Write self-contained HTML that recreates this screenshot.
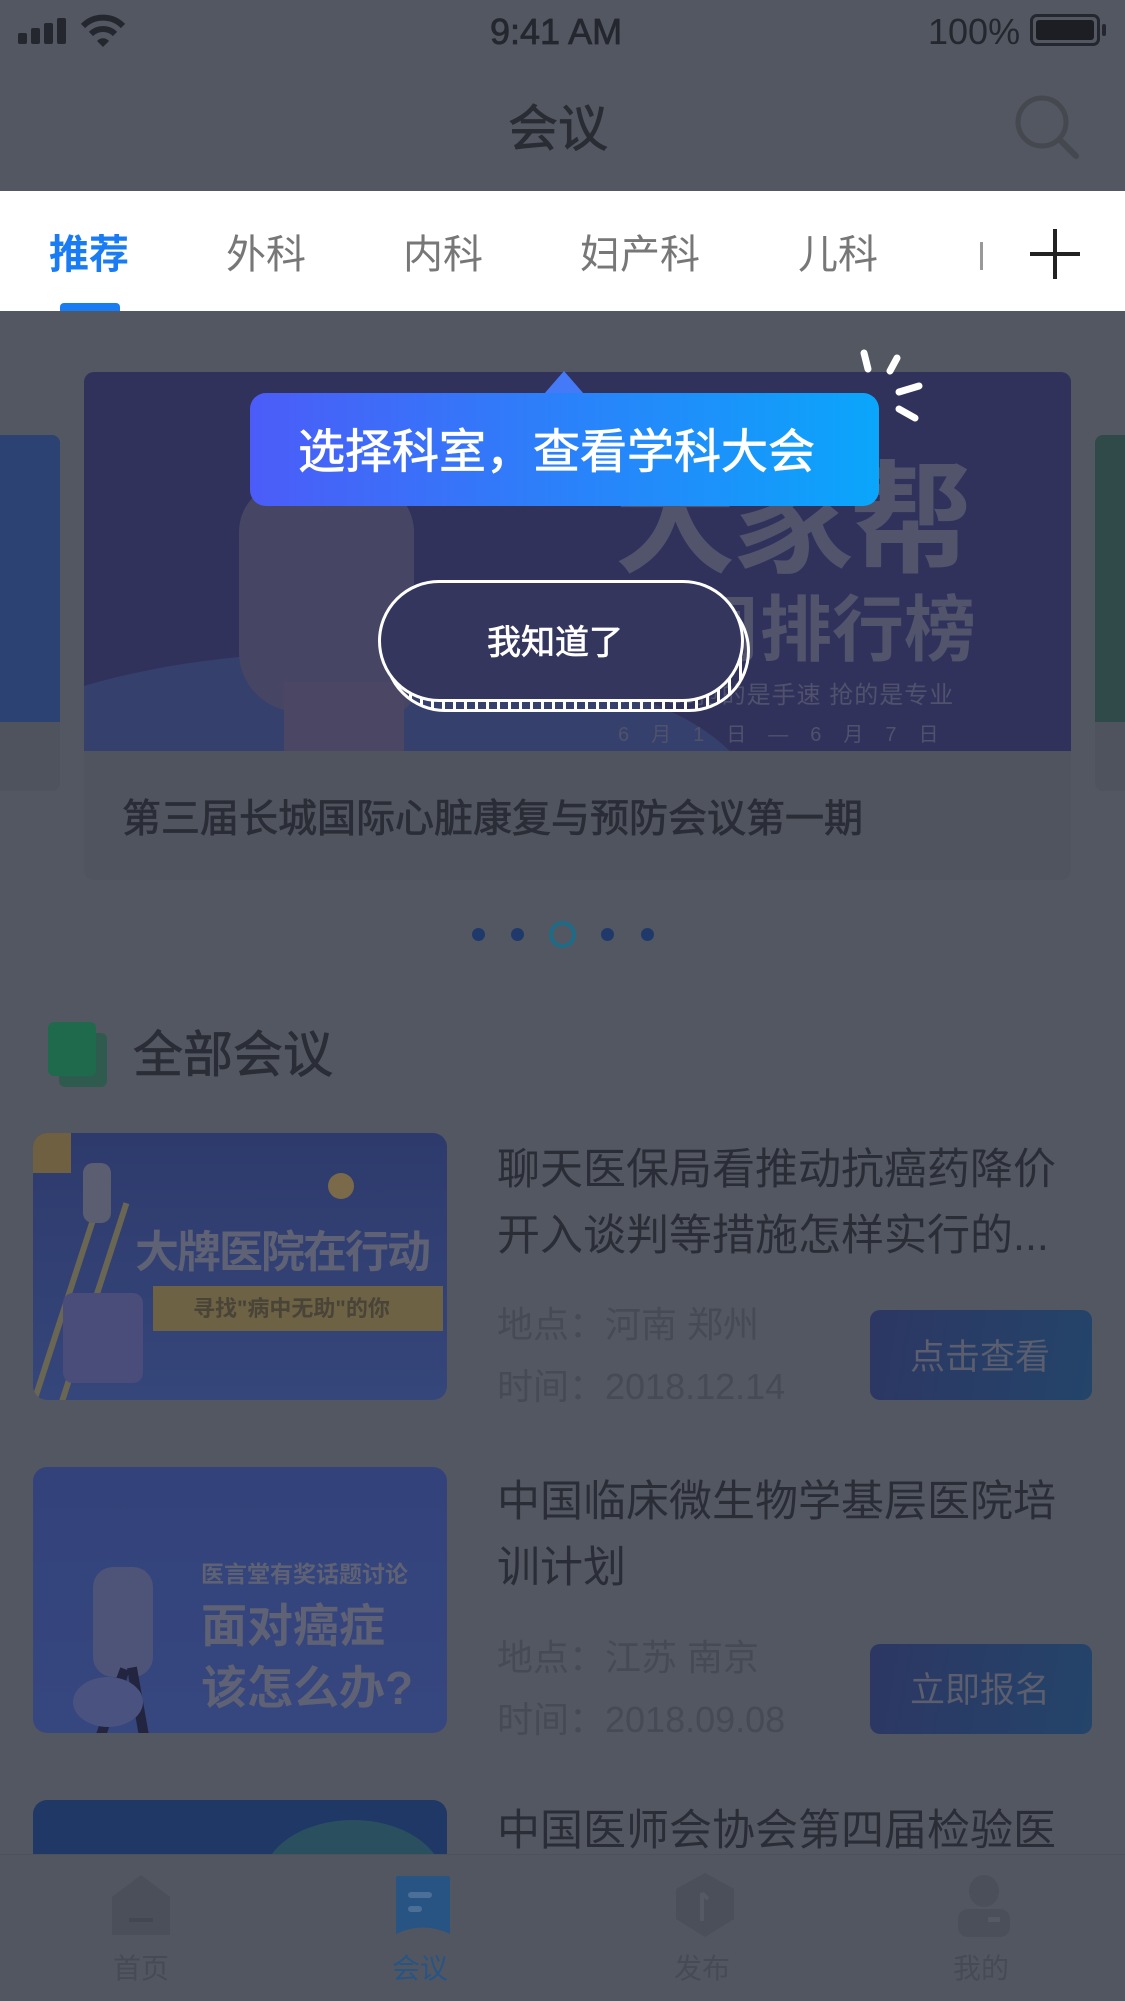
<!DOCTYPE html>
<html><head><meta charset="utf-8"><style>
*{margin:0;padding:0;box-sizing:border-box}
body{width:1125px;height:2001px;background:#535762;position:relative;overflow:hidden;font-family:"Liberation Sans","Noto Sans CJK SC",sans-serif;color:#2a2d36}
.a{position:absolute;white-space:nowrap;line-height:1}
.m{font-weight:normal;-webkit-text-stroke:0.8px currentColor}
</style></head><body>
<!-- status bar -->
<div class="a" style="left:18px;top:18px;width:52px;height:26px">
 <div class="a" style="left:0;top:15px;width:9px;height:11px;background:#25272e;border-radius:2px"></div>
 <div class="a" style="left:13px;top:10px;width:9px;height:16px;background:#25272e;border-radius:2px"></div>
 <div class="a" style="left:26px;top:5px;width:9px;height:21px;background:#25272e;border-radius:2px"></div>
 <div class="a" style="left:39px;top:0;width:9px;height:26px;background:#25272e;border-radius:2px"></div>
</div>
<svg class="a" style="left:80px;top:14px" width="46" height="34" viewBox="0 0 46 34"><path d="M3 12 A28 28 0 0 1 43 12" stroke="#25272e" stroke-width="6" fill="none"/><path d="M11 20 A17 17 0 0 1 35 20" stroke="#25272e" stroke-width="6" fill="none"/><path d="M17 27 L23 33 L29 27 A8 8 0 0 0 17 27Z" fill="#25272e"/></svg>
<div class="a m" style="left:490px;top:14px;font-size:36px;color:#25272e">9:41 AM</div>
<div class="a" style="left:928px;top:14px;font-size:36px;color:#25272e">100%</div>
<div class="a" style="left:1030px;top:14px;width:70px;height:32px;border:3px solid #25272e;border-radius:7px;padding:3px"><div style="width:100%;height:100%;background:#1c1e24;border-radius:3px"></div></div>
<div class="a" style="left:1102px;top:24px;width:4px;height:12px;background:#25272e;border-radius:2px"></div>
<!-- nav -->
<div class="a m" style="left:508px;top:104px;font-size:50px;color:#2a2c34">会议</div>
<svg class="a" style="left:1012px;top:92px" width="70" height="70" viewBox="0 0 70 70"><circle cx="30" cy="30" r="24" stroke="#45484f" stroke-width="5" fill="none"/><path d="M48 48 L64 64" stroke="#45484f" stroke-width="6" stroke-linecap="round"/></svg>
<!-- tabs -->
<div class="a" style="left:0;top:191px;width:1125px;height:120px;background:#fff"></div>
<div class="a" style="left:49px;top:235px;font-size:40px;color:#1a7cf5;font-weight:bold">推荐</div>
<div class="a" style="left:226px;top:235px;font-size:40px;color:#777">外科</div>
<div class="a" style="left:403px;top:235px;font-size:40px;color:#777">内科</div>
<div class="a" style="left:580px;top:235px;font-size:40px;color:#777">妇产科</div>
<div class="a" style="left:798px;top:235px;font-size:40px;color:#777">儿科</div>
<div class="a" style="left:980px;top:242px;width:3px;height:28px;background:#999"></div>
<div class="a" style="left:1030px;top:252px;width:50px;height:4px;background:#222"></div>
<div class="a" style="left:1053px;top:229px;width:4px;height:50px;background:#222"></div>
<div class="a" style="left:60px;top:303px;width:60px;height:8px;background:#1a7cf5;border-radius:4px 4px 0 0"></div>
<!-- side cards -->
<div class="a" style="left:0;top:435px;width:60px;height:356px;background:#4f535e;border-radius:0 8px 8px 0"></div>
<div class="a" style="left:0;top:435px;width:60px;height:287px;background:#2b4272;border-radius:0 8px 0 0"></div>
<div class="a" style="left:1095px;top:435px;width:30px;height:356px;background:#4f535e;border-radius:8px 0 0 8px"></div>
<div class="a" style="left:1095px;top:435px;width:30px;height:287px;background:#2f4a48;border-radius:8px 0 0 0"></div>
<!-- banner -->
<div class="a" style="left:84px;top:372px;width:987px;height:508px;background:#50545f;border-radius:10px;overflow:hidden">
 <div class="a" style="left:0;top:0;width:987px;height:379px;background:#30325c;overflow:hidden">
  <div class="a" style="left:-150px;top:280px;width:820px;height:300px;background:#36406c;border-radius:50%"></div>
  <div class="a" style="left:155px;top:110px;width:175px;height:230px;background:#464664;border-radius:50px 50px 20px 60px"></div>
  <div class="a" style="left:200px;top:310px;width:120px;height:90px;background:#4a4664"></div>
  <div class="a" style="left:530px;top:88px;font-size:122px;font-weight:bold;color:#52546c;letter-spacing:-4px">大家帮</div>
  <div class="a" style="left:532px;top:223px;font-size:72px;font-weight:bold;color:#52546c">每周排行榜</div>
  <div class="a" style="left:532px;top:312px;font-size:24px;color:#50526c;letter-spacing:1px">TOP10抢的是手速 抢的是专业</div>
  <div class="a" style="left:534px;top:353px;font-size:20px;color:#50526c;letter-spacing:22px">6月1日—6月7日</div>
 </div>
 <div class="a m" style="left:38px;top:428px;font-size:39px;color:#2a2d36">第三届长城国际心脏康复与预防会议第一期</div>
</div>
<!-- tooltip -->
<div class="a" style="left:544px;top:371px;width:0;height:0;border-left:20px solid transparent;border-right:20px solid transparent;border-bottom:23px solid #4479f7"></div>
<div class="a" style="left:250px;top:393px;width:629px;height:113px;border-radius:16px;background:linear-gradient(90deg,#4c5cf8,#0aa6fb)"></div>
<div class="a m" style="left:298px;top:428px;font-size:47px;color:#fff">选择科室，查看学科大会</div>
<svg class="a" style="left:855px;top:345px" width="70" height="80" viewBox="0 0 70 80"><g stroke="#fff" stroke-width="7" stroke-linecap="round"><path d="M9 8 L13 24"/><path d="M42 13 L35 26"/><path d="M44 47 L64 41"/><path d="M44 64 L60 73"/></g></svg>
<!-- button -->
<div class="a" style="left:384px;top:590px;width:366px;height:122px;border:3px solid #fff;border-radius:61px;background:repeating-linear-gradient(90deg,#fff 0 3px,transparent 3px 11px)"></div>
<div class="a" style="left:378px;top:580px;width:366px;height:122px;border:3px solid #fff;border-radius:61px;background:#34365e"></div>
<div class="a m" style="left:487px;top:626px;font-size:34px;color:#fff">我知道了</div>
<!-- dots -->
<div class="a" style="left:472px;top:928px;width:13px;height:13px;border-radius:50%;background:#1f3a6a"></div>
<div class="a" style="left:511px;top:928px;width:13px;height:13px;border-radius:50%;background:#1f3a6a"></div>
<div class="a" style="left:549px;top:921px;width:27px;height:27px;border-radius:50%;border:4px solid #1e6b87"></div>
<div class="a" style="left:601px;top:928px;width:13px;height:13px;border-radius:50%;background:#1f3a6a"></div>
<div class="a" style="left:641px;top:928px;width:13px;height:13px;border-radius:50%;background:#1f3a6a"></div>
<!-- section -->
<div class="a" style="left:59px;top:1033px;width:48px;height:54px;background:#2f5b4e;border-radius:6px"></div>
<div class="a" style="left:48px;top:1022px;width:48px;height:54px;background:#1f6a4c;border-radius:6px"></div>
<div class="a m" style="left:133px;top:1030px;font-size:50px;color:#2a2d36">全部会议</div>
<!-- item 1 -->
<div class="a" style="left:33px;top:1133px;width:414px;height:267px;border-radius:14px;background:linear-gradient(#2e3a6c,#35467a);overflow:hidden">
 <div class="a" style="left:0;top:0;width:38px;height:40px;background:#6e6040"></div>
 <div class="a" style="left:120px;top:153px;width:290px;height:45px;background:#6d6244"></div>
 <div class="a" style="left:102px;top:98px;font-size:44px;font-weight:bold;color:#5e6274;letter-spacing:-2px">大牌医院在行动</div>
 <div class="a" style="left:160px;top:165px;font-size:22px;color:#4a4438;font-weight:bold">寻找"病中无助"的你</div>
 <div class="a" style="left:30px;top:65px;width:6px;height:210px;background:#6a6654;transform:rotate(18deg)"></div>
 <div class="a" style="left:58px;top:65px;width:6px;height:210px;background:#6a6654;transform:rotate(18deg)"></div>
 <div class="a" style="left:30px;top:160px;width:80px;height:90px;background:#4a4c7a;border-radius:10px"></div>
 <div class="a" style="left:50px;top:30px;width:28px;height:60px;background:#5a5e70;border-radius:10px"></div>
 <div class="a" style="left:295px;top:40px;width:26px;height:26px;background:#7a6a4a;border-radius:50%"></div>
</div>
<div class="a" style="left:497px;top:1137px;font-size:43px;line-height:66px;color:#2a2d36">聊天医保局看推动抗癌药降价<br>开入谈判等措施怎样实行的...</div>
<div class="a" style="left:497px;top:1307px;font-size:36px;color:#464a55">地点：河南 郑州</div>
<div class="a" style="left:497px;top:1369px;font-size:36px;color:#464a55">时间：2018.12.14</div>
<div class="a" style="left:870px;top:1310px;width:222px;height:90px;border-radius:10px;background:linear-gradient(100deg,#2c3763,#24446a)"></div>
<div class="a" style="left:910px;top:1340px;font-size:35px;color:#5a5e6e">点击查看</div>
<!-- item 2 -->
<div class="a" style="left:33px;top:1467px;width:414px;height:266px;border-radius:14px;background:linear-gradient(#33427a,#36467e);overflow:hidden">
 <div class="a" style="left:168px;top:96px;font-size:23px;font-weight:bold;color:#5e6274">医言堂有奖话题讨论</div>
 <div class="a" style="left:168px;top:128px;font-size:46px;font-weight:bold;color:#5e6274;line-height:62px">面对癌症<br>该怎么办?</div>
 <div class="a" style="left:60px;top:100px;width:60px;height:110px;background:#4e5478;border-radius:20px"></div>
 <div class="a" style="left:75px;top:200px;width:10px;height:70px;background:#232440;transform:rotate(20deg)"></div>
 <div class="a" style="left:100px;top:200px;width:10px;height:70px;background:#232440;transform:rotate(-10deg)"></div>
 <div class="a" style="left:40px;top:210px;width:70px;height:50px;background:#4a5280;border-radius:50%"></div>
</div>
<div class="a" style="left:497px;top:1469px;font-size:43px;line-height:66px;color:#2a2d36">中国临床微生物学基层医院培<br>训计划</div>
<div class="a" style="left:497px;top:1640px;font-size:36px;color:#464a55">地点：江苏 南京</div>
<div class="a" style="left:497px;top:1702px;font-size:36px;color:#464a55">时间：2018.09.08</div>
<div class="a" style="left:870px;top:1644px;width:222px;height:90px;border-radius:10px;background:linear-gradient(100deg,#2c3763,#24446a)"></div>
<div class="a" style="left:910px;top:1673px;font-size:35px;color:#5a5e6e">立即报名</div>
<!-- item 3 -->
<div class="a" style="left:33px;top:1800px;width:414px;height:80px;border-radius:14px;background:#203866;overflow:hidden"><div class="a" style="left:230px;top:20px;width:180px;height:120px;border-radius:50%;background:#2a5060"></div></div>
<div class="a" style="left:497px;top:1810px;font-size:43px;color:#2a2d36">中国医师会协会第四届检验医</div>
<!-- tab bar -->
<div class="a" style="left:0;top:1854px;width:1125px;height:147px;background:#525661;border-top:1px solid #4d515b"></div>
<svg class="a" style="left:112px;top:1875px" width="58" height="62" viewBox="0 0 58 62"><path d="M29 0 L58 22 L58 60 L0 60 L0 22Z" fill="#4b4f5a"/><rect x="17" y="43" width="24" height="4" fill="#43474f"/></svg>
<svg class="a" style="left:396px;top:1876px" width="54" height="58" viewBox="0 0 54 58"><path d="M0 2 Q0 0 2 0 L52 0 Q54 0 54 2 L54 58 Q27 45 0 58Z" fill="#285484"/><rect x="12" y="16" width="24" height="6" rx="3" fill="#4b6f96"/><rect x="12" y="30" width="14" height="6" rx="3" fill="#4b6f96"/></svg>
<svg class="a" style="left:676px;top:1873px" width="58" height="64" viewBox="0 0 58 64"><path d="M29 0 L58 16 L58 46 L29 64 L0 46 L0 16Z" fill="#4b4f5a"/><path d="M26 20 L26 48 M26 20 L32 26" stroke="#555963" stroke-width="4"/></svg>
<svg class="a" style="left:958px;top:1875px" width="52" height="62" viewBox="0 0 52 62"><ellipse cx="26" cy="16" rx="15" ry="16" fill="#4b4f5a"/><rect x="0" y="34" width="52" height="28" rx="10" fill="#4b4f5a"/><rect x="30" y="42" width="12" height="5" fill="#555963"/></svg>
<div class="a" style="left:113px;top:1955px;font-size:28px;color:#464a55">首页</div>
<div class="a" style="left:392px;top:1955px;font-size:28px;color:#285484">会议</div>
<div class="a" style="left:674px;top:1955px;font-size:28px;color:#464a55">发布</div>
<div class="a" style="left:953px;top:1955px;font-size:28px;color:#464a55">我的</div>
</body></html>
